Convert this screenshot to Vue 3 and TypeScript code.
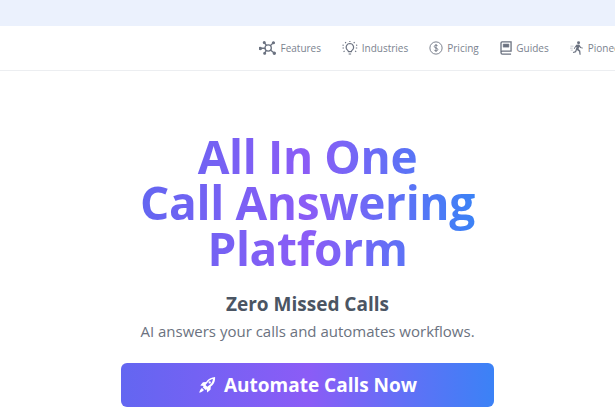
<script setup lang="ts">
</script>

<template>
  <div class="page">
    <div class="banner"></div>
    <nav class="nav">
      <a class="item">
        <svg class="ico" viewBox="0 0 20 16" fill="none" stroke="currentColor" stroke-width="1.5">
          <circle cx="10.500" cy="8" r="3.600" />
          <circle cx="1.500" cy="8.500" r="1.300" fill="currentColor" />
          <circle cx="6" cy="1.800" r="1" fill="currentColor" />
          <circle cx="16.500" cy="2" r="1.100" fill="currentColor" />
          <circle cx="17.500" cy="14" r="1.200" fill="currentColor" />
          <circle cx="6.500" cy="14" r="1" fill="currentColor" />
          <path d="M3 8.300h4M6.300 2.300l2.200 2.700M15.800 2.700l-3 2.700M16.600 13.200l-3.500-3M6.900 13.400l1.300-2.600" />
        </svg>
        Features
      </a>
      <a class="item">
        <svg class="ico" viewBox="0 0 18 16" fill="none" stroke="currentColor" stroke-width="1.300">
          <path d="M9 2.800a4.300 4.300 0 0 0-2.700 7.600c.6.500.9 1 1 1.700h3.400c.1-.7.400-1.200 1-1.700A4.300 4.300 0 0 0 9 2.800zM7.600 14.800h2.800" />
          <path d="M9 0v1.200M3.600 1.200l1 1.100M14.400 1.200l-1 1.100M.6 4.500l1.300.5M17.400 4.500l-1.300.5M.6 8h1.600M15.800 8h1.600M1.800 12.200l1.200-.9M16.200 12.200l-1.200-.9" />
        </svg>
        Industries
      </a>
      <a class="item">
        <svg class="ico" viewBox="0 0 16 16" fill="none" stroke="currentColor" stroke-width="1">
          <circle cx="8" cy="8" r="7" />
          <path d="M10 5.800c-.4-.8-1.100-1.100-2-1.100-1.100 0-2 .6-2 1.600 0 2.200 4.100 1.200 4.100 3.400 0 1-.9 1.600-2.100 1.600-1 0-1.800-.4-2.100-1.200M8 3.600v8.800" />
        </svg>
        Pricing
      </a>
      <a class="item">
        <svg class="ico ico-book" viewBox="0 0 14 16" fill="none" stroke="currentColor" stroke-width="1.500">
          <path d="M1 13V2.200C1 1.500 1.500 1 2.200 1h10.300v10.500H2.500c-.9 0-1.500.6-1.500 1.500s.6 2 1.500 2h10" />
          <path d="M3.500 3.500h6.500v3.500H3.500z" fill="currentColor" stroke-width=".6" />
        </svg>
        Guides
      </a>
      <a class="item">
        <svg class="ico" viewBox="0 0 16 16" fill="currentColor">
          <circle cx="9.800" cy="2" r="1.700" />
          <path d="M7.200 4.200l3.400-.2 2 3 2.200.6-.3 1.100-2.900-.8-1-1.200-.8 2.500 2 2 .4 4.600h-1.300l-.6-3.800-2.400-1.800-1 2.600-3.200 1-.4-1.200 2.600-.8 1.600-5-1.200.3-1 2-1-.5z" />
          <path d="M.5 5.500h3.500v.8H.5zM0 7.800h3v.8H0zM.8 10h2.400v.8H.8z" opacity=".5" />
        </svg>
        Pioneers
      </a>
    </nav>
    <main class="hero">
      <h1 class="title">All In One<br />Call Answering<br />Platform</h1>
      <h2 class="sub">Zero Missed Calls</h2>
      <p class="lead">AI answers your calls and automates workflows.</p>
      <button class="cta" type="button">
        <svg class="rocket" viewBox="0 0 20 20" fill="none">
          <path fill="#fff" fill-rule="evenodd" d="M19 1c.3 3.900-.8 7-3.300 9.500l-1.500 1.300-.3 3.500-3.700 3-.5-3.700-1.300.9-3.100-3.100.9-1.300-3.700-.5 3-3.700 3.500-.3 1.300-1.500C12 3 15.100 1.200 19 1zm-2.400 2.400c-2 .4-3.700 1.300-5 2.700l-3.200 4 1.900 1.900 3.900-3.100c1.300-1.400 2-3.300 2.400-5.500zM13 5.800a1.300 1.300 0 1 0 0 2.600 1.300 1.300 0 0 0 0-2.600z" />
          <path fill="#fff" d="M4.400 13.400l2.200 2.200c-.8 1.300-2.500 2.400-5.200 3 .6-2.700 1.700-4.400 3-5.200z" />
        </svg>
        <span>Automate Calls Now</span>
      </button>
    </main>
  </div>
</template>

<style>
html,
body {
  margin: 0;
  background: #fff;
  overflow: hidden;
}
</style>

<style scoped>
.page {
  width: 615px;
  height: 410px;
  overflow: hidden;
  background: #fff;
  font-family: "Open Sans", "Noto Sans", sans-serif;
}
.banner {
  height: 26px;
  background: #ebf1fd;
}
.nav {
  height: 44px;
  display: flex;
  align-items: center;
  gap: 21px;
  padding-left: 259px;
  border-bottom: 1px solid #eceef1;
  white-space: nowrap;
}
.item {
  display: flex;
  align-items: center;
  gap: 4px;
  flex: none;
  font-size: 10px;
  color: #7b838f;
}
.ico {
  height: 14px;
  width: auto;
  color: #6b7280;
  flex: none;
}
.ico-book {
  width: 12.500px;
}
.hero {
  display: flex;
  flex-direction: column;
  align-items: center;
}
.title {
  margin: 62px 0 0;
  font-size: 46px;
  line-height: 46px;
  letter-spacing: -0.35px;
  font-weight: 700;
  text-align: center;
  background: linear-gradient(90deg, #6366f1, #8b5cf6, #3b82f6);
  -webkit-background-clip: text;
  background-clip: text;
  color: transparent;
}
.sub {
  margin: 19px 0 0;
  font-size: 19px;
  line-height: 28px;
  font-weight: 700;
  color: #4b5563;
}
.lead {
  margin: 0;
  font-size: 15px;
  line-height: 26px;
  color: #6b7280;
}
.cta {
  margin-top: 19px;
  width: 373px;
  height: 44px;
  display: flex;
  align-items: center;
  justify-content: center;
  gap: 8px;
  border: 0;
  border-radius: 6px;
  background: linear-gradient(90deg, #6366f1, #8b5cf6, #3b82f6);
  color: #fff;
  font-family: inherit;
  font-size: 19px;
  font-weight: 700;
}
.rocket {
  width: 18px;
  height: 18px;
}
</style>
